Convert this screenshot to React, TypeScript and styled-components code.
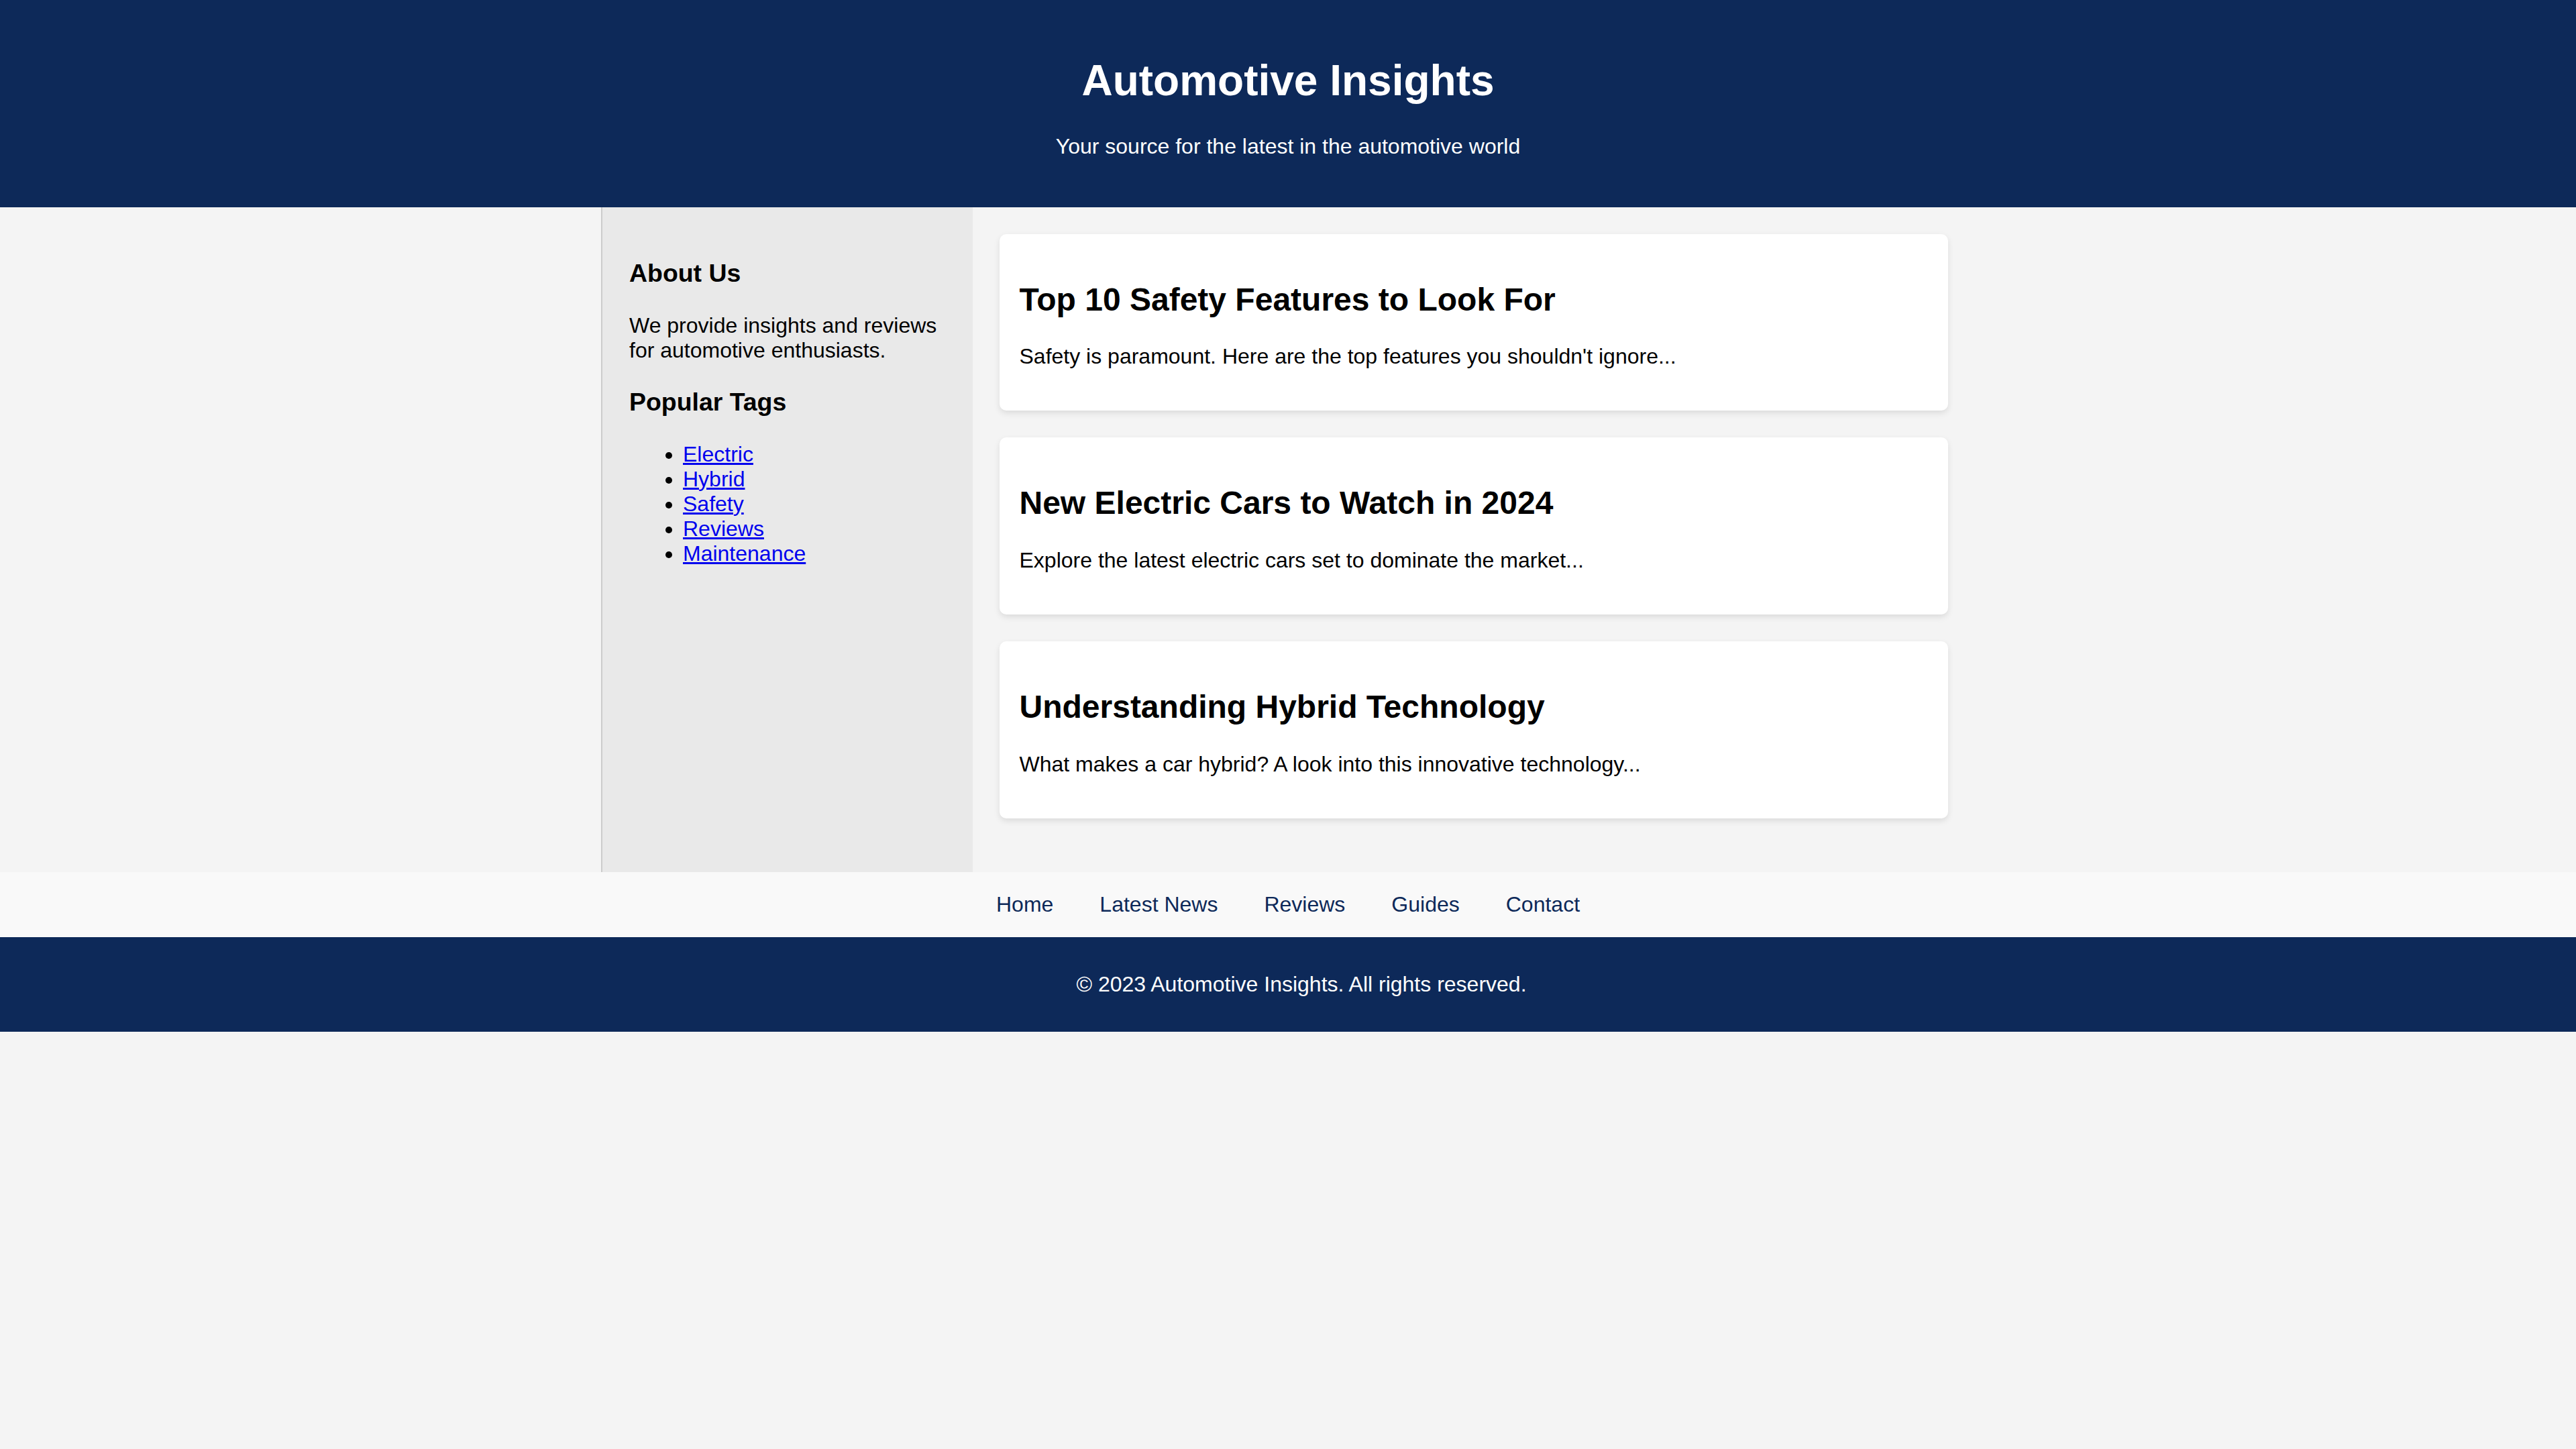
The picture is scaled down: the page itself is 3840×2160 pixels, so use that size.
import React from 'react';
import styled, { createGlobalStyle } from 'styled-components';

const navy = '#0d2959';

const GlobalStyle = createGlobalStyle`
  html,
  body {
    margin: 0;
    padding: 0;
    background-color: #f4f4f4;
    font-family: 'Liberation Sans', Arial, Helvetica, sans-serif;
    font-size: 32px;
    color: #000;
  }
`;

const Header = styled.header`
  background-color: ${navy};
  color: #fff;
  text-align: center;
  padding: 40px;

  h1 {
    font-size: 2em;
    margin: 0.67em 0;
  }

  p {
    margin: 1em 0;
  }
`;

const Container = styled.div`
  display: flex;
  max-width: 2048px;
  margin: 0 auto;
`;

const Sidebar = styled.aside`
  flex: 1;
  padding: 40px;
  background-color: #e9e9e9;
  border-left: 2px solid #cccccc;

  h3 {
    font-size: 1.17em;
    margin: 1em 0;
  }

  p {
    margin: 1em 0;
  }

  ul {
    margin: 1em 0;
    padding-left: 80px;
  }

  a {
    color: #0000ee;
  }
`;

const Main = styled.main`
  flex: 3;
  padding: 40px;
`;

const Article = styled.article`
  background-color: #fff;
  padding: 30px;
  margin-bottom: 40px;
  border-radius: 10px;
  box-shadow: 0 4px 10px rgba(0, 0, 0, 0.1);

  h2 {
    font-size: 1.5em;
    margin: 0.83em 0;
  }

  p {
    margin: 1em 0;
  }
`;

const Nav = styled.nav`
  background-color: #f9f9f9;
  padding: 30px 0;
`;

const NavList = styled.ul`
  display: flex;
  justify-content: center;
  gap: 69px;
  list-style: none;
  margin: 0;
  padding: 0;

  a {
    color: ${navy};
    text-decoration: none;
  }
`;

// the copyright line sits a little right of centre in the original
const Footer = styled.footer`
  background-color: ${navy};
  color: #fff;
  text-align: center;
  padding: 20px 0 20px 40px;

  p {
    margin: 1em 0;
  }
`;

const articles = [
  {
    title: 'Top 10 Safety Features to Look For',
    text: "Safety is paramount. Here are the top features you shouldn't ignore...",
  },
  {
    title: 'New Electric Cars to Watch in 2024',
    text: 'Explore the latest electric cars set to dominate the market...',
  },
  {
    title: 'Understanding Hybrid Technology',
    text: 'What makes a car hybrid? A look into this innovative technology...',
  },
];

const tags = ['Electric', 'Hybrid', 'Safety', 'Reviews', 'Maintenance'];
const links = ['Home', 'Latest News', 'Reviews', 'Guides', 'Contact'];

function App() {
  return (
    <>
      <GlobalStyle />
      <Header>
        <h1>Automotive Insights</h1>
        <p>Your source for the latest in the automotive world</p>
      </Header>
      <Container>
        <Sidebar>
          <h3>About Us</h3>
          <p>We provide insights and reviews for automotive enthusiasts.</p>
          <h3>Popular Tags</h3>
          <ul>
            {tags.map((tag) => (
              <li key={tag}>
                <a href="#">{tag}</a>
              </li>
            ))}
          </ul>
        </Sidebar>
        <Main>
          {articles.map((article) => (
            <Article key={article.title}>
              <h2>{article.title}</h2>
              <p>{article.text}</p>
            </Article>
          ))}
        </Main>
      </Container>
      <Nav>
        <NavList>
          {links.map((link) => (
            <li key={link}>
              <a href="#">{link}</a>
            </li>
          ))}
        </NavList>
      </Nav>
      <Footer>
        <p>&copy; 2023 Automotive Insights. All rights reserved.</p>
      </Footer>
    </>
  );
}

export default App;
